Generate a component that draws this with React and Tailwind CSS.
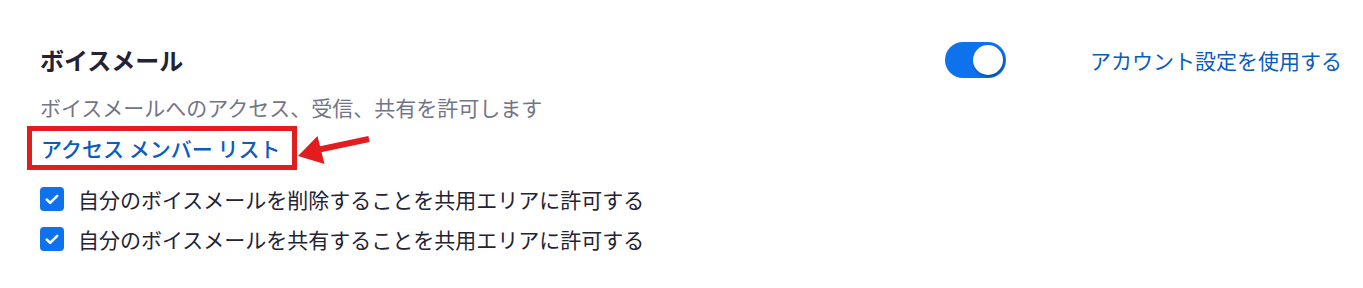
import React from 'react';

const font = { fontFamily: '"Noto Sans CJK JP", "Noto Sans", sans-serif' };

function Toggle() {
  return (
    <div className="flex h-[36px] w-[61px] items-center justify-end rounded-full bg-[#0e72ed] pr-[3px]">
      <div className="h-[30px] w-[30px] rounded-full bg-white shadow-[1px_2px_3px_rgba(0,0,0,0.35)]" />
    </div>
  );
}

function CheckBox() {
  return (
    <span className="flex h-[24px] w-[24px] items-center justify-center rounded-[4px] bg-[#0e72ed]">
      <svg width="14" height="11" viewBox="0 0 14 11" fill="none">
        <path d="M1.8 5.6 L5.2 8.8 L12.2 1.8" stroke="white" strokeWidth="2.6" strokeLinecap="round" strokeLinejoin="round" />
      </svg>
    </span>
  );
}

function Arrow() {
  return (
    <svg width="75" height="36" viewBox="0 0 75 36" className="shrink-0">
      <line x1="20" y1="20" x2="72" y2="9" stroke="#e21d1f" strokeWidth="6" />
      <polygon points="1,26 20.5,6 27.5,34" fill="#e21d1f" />
    </svg>
  );
}

export default function App() {
  const options = [
    '自分のボイスメールを削除することを共用エリアに許可する',
    '自分のボイスメールを共有することを共用エリアに許可する',
  ];

  return (
    <div className="h-[288px] w-full bg-white pl-[40px] pr-[21px] pt-[42px]" style={font}>
      <div className="flex items-center justify-between">
        <h2 className="text-[24px] font-bold leading-[32px] text-[#232333]">ボイスメール</h2>
        <div className="flex items-center gap-[84px]">
          <Toggle />
          <a className="text-[21px] leading-[28px] text-[#0b5cbf]">アカウント設定を使用する</a>
        </div>
      </div>

      <p className="mt-[15px] text-[21px] leading-[28px] text-[#747487]">
        ボイスメールへのアクセス、受信、共有を許可します
      </p>

      <div className="-ml-[13px] mt-[5px] flex items-center">
        <div className="flex h-[44px] items-center border-[5px] border-[#e21d1f] pl-[9px] pr-[12px]">
          <a className="text-[21px] font-medium leading-[34px] text-[#0b5cbf]">アクセス メンバー リスト</a>
        </div>
        <Arrow />
      </div>

      <div className="mt-[13px] flex flex-col gap-[8px]">
        {options.map((t) => (
          <label key={t} className="flex h-[32px] items-center gap-[14px]">
            <CheckBox />
            <span className="text-[21px] leading-[32px] text-[#232333]">{t}</span>
          </label>
        ))}
      </div>
    </div>
  );
}
